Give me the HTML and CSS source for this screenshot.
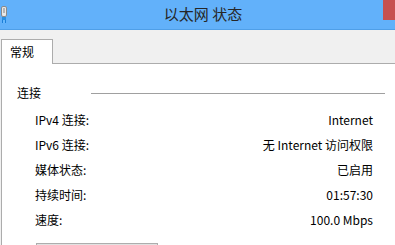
FILE: index.html
```html
<!DOCTYPE html>
<html>
<head>
    <title>以太网 状态</title>
    <link rel="stylesheet" href="styles.css">
</head>
<body>
    <div class="window">
        <div class="titlebar">
            <svg class="app-icon" width="8" height="18" viewBox="0 0 8 18">
                <rect x="1.5" y="0.5" width="5" height="10" rx="1.5" fill="#e8e8e8" stroke="#8a8a8a"/>
                <rect x="3" y="2" width="2" height="5" fill="#b5b5b5"/>
                <rect x="2" y="11" width="4" height="3" fill="#2a8fe0"/>
                <rect x="2" y="14" width="1" height="3" fill="#1c7fd8"/>
                <rect x="3.5" y="14" width="1" height="3" fill="#6fc0ff"/>
                <rect x="5" y="14" width="1" height="3" fill="#1c7fd8"/>
            </svg>
            <div class="title">以太网 状态</div>
            <div class="close-btn"></div>
        </div>
        <div class="content">
            <div class="tabs">
                <div class="tab">常规</div>
            </div>
            <div class="panel">
                <div class="group">
                    <div class="group-head">
                        <span class="group-label">连接</span>
                        <span class="group-line"></span>
                    </div>
                    <div class="rows">
                        <div class="row"><span>IPv4 连接:</span><span>Internet</span></div>
                        <div class="row"><span>IPv6 连接:</span><span>无 Internet 访问权限</span></div>
                        <div class="row"><span>媒体状态:</span><span>已启用</span></div>
                        <div class="row"><span>持续时间:</span><span>01:57:30</span></div>
                        <div class="row"><span>速度:</span><span>100.0 Mbps</span></div>
                    </div>
                    <button class="details-btn" aria-label="详细信息"></button>
                </div>
            </div>
        </div>
    </div>
</body>
</html>
```

FILE: styles.css
```css
body {
    margin: 0;
    font-family: "Noto Sans CJK SC", "Noto Sans", sans-serif;
    font-size: 12px;
    color: #000;
    background: #f0f0f0;
    overflow: hidden;
}
.window {
    width: 395px;
    height: 245px;
    overflow: hidden;
}
.titlebar {
    display: flex;
    align-items: flex-start;
    height: 29px;
    background: #62b1fa;
    border-bottom: 1px solid #4f9fe8;
}
.app-icon {
    margin-top: 6px;
    flex: none;
}
.title {
    flex: 1;
    text-align: center;
    padding-left: 15px;
    font-size: 15px;
    line-height: 28px;
    color: #262626;
}
.close-btn {
    width: 12px;
    height: 20px;
    background: #c75050;
    flex: none;
}
.content {
    background: #f0f0f0;
    padding-top: 9px;
}
.tabs {
    display: flex;
    padding-left: 1px;
}
.tab {
    position: relative;
    z-index: 1;
    width: 42px;
    height: 24px;
    padding-left: 8px;
    line-height: 24px;
    background: #fff;
    border: 1px solid #acacac;
    border-bottom: none;
    margin-bottom: -1px;
}
.panel {
    margin-left: 1px;
    width: 420px;
    height: 200px;
    background: #fff;
    border-top: 1px solid #acacac;
    border-left: 1px solid #acacac;
}
.group {
    width: 368px;
    padding: 21px 0 0 15px;
}
.group-head {
    display: flex;
    align-items: center;
    height: 16px;
    line-height: 16px;
}
.group-label {
    width: 74px;
}
.group-line {
    flex: 1;
    border-top: 1px solid #a0a0a0;
}
.rows {
    margin-top: 6px;
    padding: 0 12px 0 18px;
}
.row {
    display: flex;
    justify-content: space-between;
    height: 25px;
    line-height: 25px;
}
.details-btn {
    display: block;
    margin: 11px 0 0 19px;
    width: 122px;
    height: 23px;
    background: #e1e1e1;
    border: 1px solid #adadad;
}
```
